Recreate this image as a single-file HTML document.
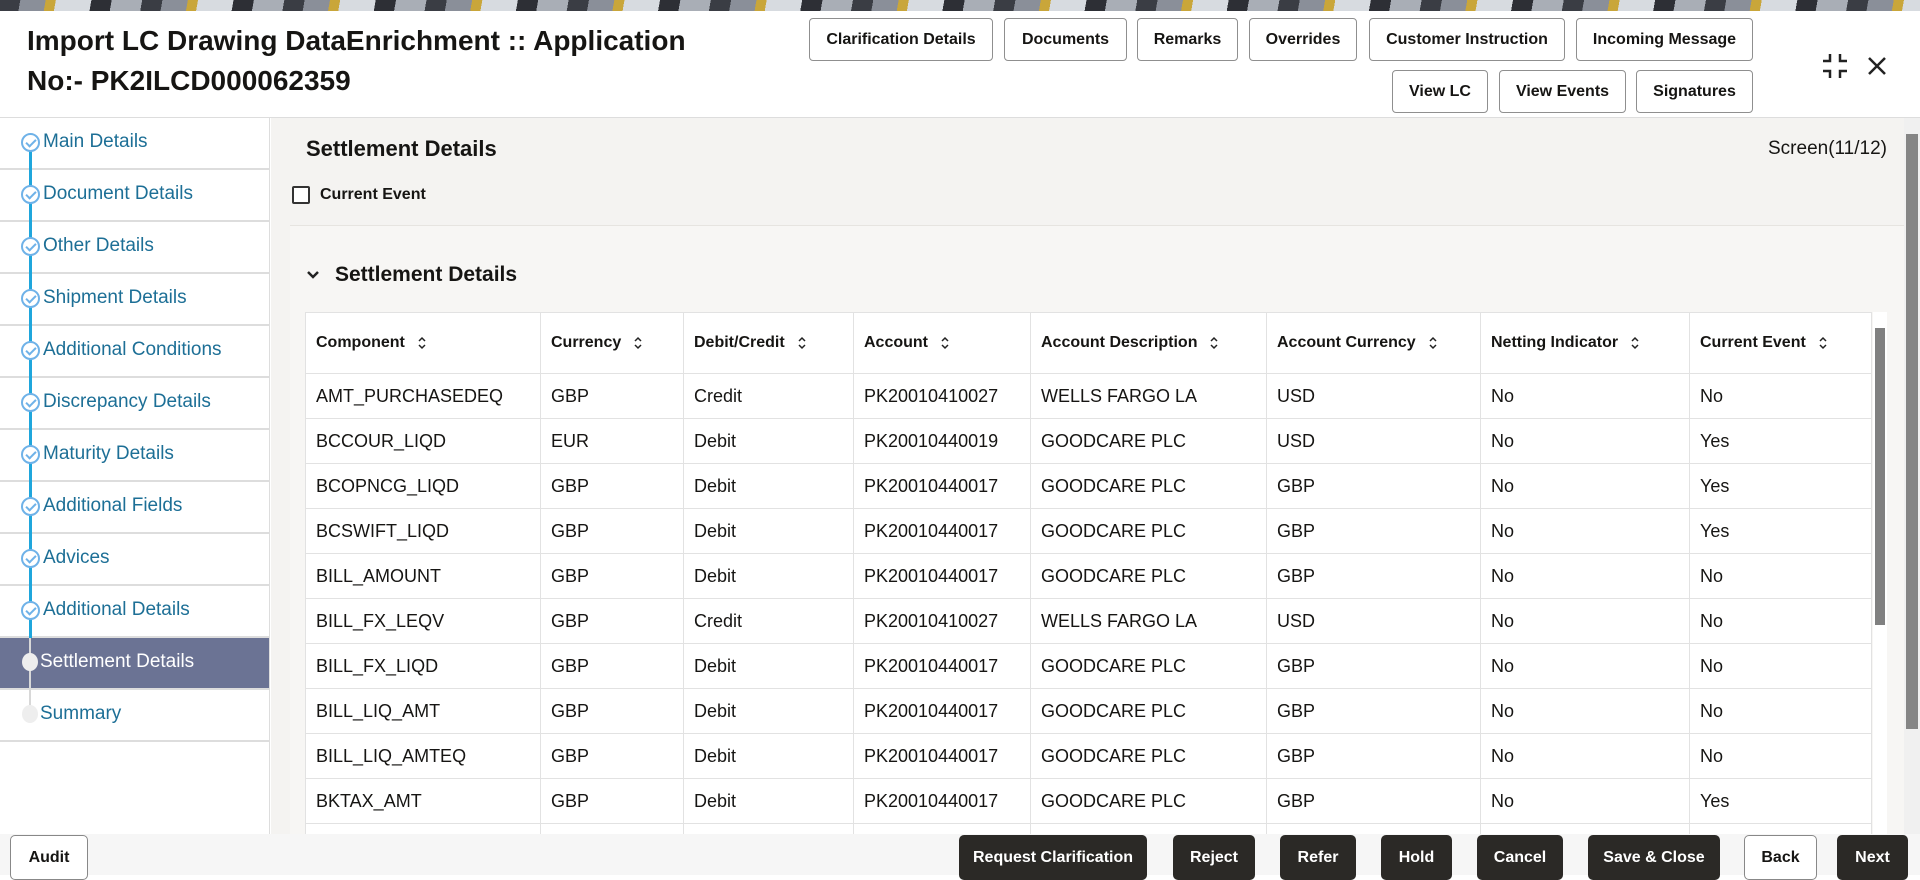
<!DOCTYPE html>
<html><head><meta charset="utf-8"><style>
*{box-sizing:border-box;margin:0;padding:0}
body{width:1920px;height:875px;overflow:hidden;font-family:"Liberation Sans",sans-serif;background:#fff;position:relative;color:#161513}
.banner{position:absolute;left:0;top:0;width:1920px;height:11px;background:repeating-linear-gradient(100deg,#3a3d44 0 20px,#8a8f99 20px 45px,#c9a63a 45px 55px,#d7dbe0 55px 90px,#2d2f35 90px 110px,#a9aeb6 110px 140px)}
.hdr{position:absolute;left:0;top:11px;width:1920px;height:107px;background:#fff;border-bottom:1px solid #ddd}
.title{position:absolute;left:27px;top:21px;font-size:28px;font-weight:bold;line-height:40px;color:#161513}
.btn{position:absolute;height:43px;border:1px solid #8f8f8f;border-radius:4px;background:#fff;font-size:16px;font-weight:bold;display:flex;align-items:center;justify-content:center;color:#161513}
.side{position:absolute;left:0;top:118px;width:270px;height:716px;background:#fff;border-right:1px solid #ddd}
.item{position:relative;height:52px;border-bottom:2px solid #ddd;font-size:19px;color:#1d6f96;padding-left:43px;line-height:48px}
.item .ln{position:absolute;left:29px;top:0;width:3px;height:52px;background:#1fa6dc}
.item .c{position:absolute;left:21px;top:15px;width:19px;height:19px;border-radius:50%;border:2px solid #6fb2e8;background:#fff}
.item .c:after{content:"";position:absolute;left:5px;top:2px;width:4px;height:8px;border:solid #6fb2e8;border-width:0 2px 2px 0;transform:rotate(45deg)}
.item.act{background:#6b7394;color:#fff;padding-left:40px}
.item.act .ln,.item.sum .ln{background:#d8d8d8;width:2px}
.item .d{position:absolute;left:22px;top:15px;width:16px;height:18px;border-radius:50%;background:#eee}
.main{position:absolute;left:271px;top:118px;width:1633px;height:716px;background:#f4f3f1}
.panel{position:absolute;left:290px;top:225px;width:1614px;height:609px;background:#f7f6f4;border-top:1px solid #e6e4e0}
table{position:absolute;left:305px;top:312px;border-collapse:collapse;background:#fff;font-size:18px}
td,th{border:1px solid #e2e2e2;padding:0 10px;text-align:left;white-space:nowrap}
th{height:61px;font-size:16px;font-weight:bold}
td{height:45px}
.s{display:inline-block;margin-left:12px;vertical-align:middle}
.foot{position:absolute;left:0;top:834px;width:1920px;height:41px;background:#f6f6f6}
.fb{position:absolute;top:835px;height:45px;border-radius:5px;background:#2b2926;color:#fff;font-size:16px;font-weight:bold;display:flex;align-items:center;justify-content:center}
.fw{background:#fff;color:#161513;border:1px solid #888}
</style></head><body>
<div class="banner"></div>
<div class="hdr"></div>
<div class="title">Import LC Drawing DataEnrichment :: Application<br>No:- PK2ILCD000062359</div>
<div class="btn" style="left:809px;top:18px;width:184px">Clarification Details</div>
<div class="btn" style="left:1004px;top:18px;width:123px">Documents</div>
<div class="btn" style="left:1137px;top:18px;width:101px">Remarks</div>
<div class="btn" style="left:1249px;top:18px;width:108px">Overrides</div>
<div class="btn" style="left:1369px;top:18px;width:196px">Customer Instruction</div>
<div class="btn" style="left:1576px;top:18px;width:177px">Incoming Message</div>
<div class="btn" style="left:1392px;top:70px;width:96px">View LC</div>
<div class="btn" style="left:1499px;top:70px;width:127px">View Events</div>
<div class="btn" style="left:1636px;top:70px;width:117px">Signatures</div>
<svg style="position:absolute;left:1821px;top:52px" width="28" height="28" viewBox="0 0 28 28" fill="none" stroke="#222" stroke-width="2.5"><path d="M9 2v7H2M19 2v7h7M9 26v-7H2M19 26v-7h7"/></svg>
<svg style="position:absolute;left:1866px;top:55px" width="22" height="22" viewBox="0 0 22 22" stroke="#222" stroke-width="2.5"><path d="M3 3l16 16M19 3L3 19"/></svg>
<div class="side">
<div class="item"><span class="ln" style="top:26px;height:26px"></span><span class="c"></span>Main Details</div>
<div class="item"><span class="ln"></span><span class="c"></span>Document Details</div>
<div class="item"><span class="ln"></span><span class="c"></span>Other Details</div>
<div class="item"><span class="ln"></span><span class="c"></span>Shipment Details</div>
<div class="item"><span class="ln"></span><span class="c"></span>Additional Conditions</div>
<div class="item"><span class="ln"></span><span class="c"></span>Discrepancy Details</div>
<div class="item"><span class="ln"></span><span class="c"></span>Maturity Details</div>
<div class="item"><span class="ln"></span><span class="c"></span>Additional Fields</div>
<div class="item"><span class="ln"></span><span class="c"></span>Advices</div>
<div class="item"><span class="ln"></span><span class="c"></span>Additional Details</div>
<div class="item act"><span class="ln"></span><span class="d"></span>Settlement Details</div>
<div class="item sum" style="padding-left:40px"><span class="ln" style="height:20px"></span><span class="d"></span>Summary</div>
</div>
<div class="main"></div>
<div style="position:absolute;left:306px;top:136px;font-size:22px;font-weight:bold">Settlement Details</div>
<div style="position:absolute;right:33px;top:138px;font-size:19px">Screen(11/12)</div>
<div style="position:absolute;left:292px;top:186px;width:18px;height:18px;border:2px solid #333;border-radius:2px;background:#fff"></div>
<div style="position:absolute;left:320px;top:186px;font-size:16px;font-weight:bold">Current Event</div>
<div class="panel"></div>
<svg style="position:absolute;left:306px;top:269px" width="14" height="12" viewBox="0 0 14 12" fill="none" stroke="#222" stroke-width="2.5"><path d="M2 3l5 5 5-5"/></svg>
<div style="position:absolute;left:335px;top:263px;font-size:21px;font-weight:bold">Settlement Details</div>
<svg width="0" height="0" style="position:absolute"><defs><symbol id="srt" viewBox="0 0 10 16"><path d="M2 6l3-3 3 3M2 10l3 3 3-3" fill="none" stroke="#222" stroke-width="1.5"/></symbol></defs></svg>
<table>
<tr><th style="width:235px">Component<svg class="s" width="10" height="16"><use href="#srt"/></svg></th><th style="width:143px">Currency<svg class="s" width="10" height="16"><use href="#srt"/></svg></th><th style="width:170px">Debit/Credit<svg class="s" width="10" height="16"><use href="#srt"/></svg></th><th style="width:177px">Account<svg class="s" width="10" height="16"><use href="#srt"/></svg></th><th style="width:236px">Account Description<svg class="s" width="10" height="16"><use href="#srt"/></svg></th><th style="width:214px">Account Currency<svg class="s" width="10" height="16"><use href="#srt"/></svg></th><th style="width:209px">Netting Indicator<svg class="s" width="10" height="16"><use href="#srt"/></svg></th><th style="width:182px">Current Event<svg class="s" width="10" height="16"><use href="#srt"/></svg></th></tr>
<tr><td>AMT_PURCHASEDEQ</td><td>GBP</td><td>Credit</td><td>PK20010410027</td><td>WELLS FARGO LA</td><td>USD</td><td>No</td><td>No</td></tr>
<tr><td>BCCOUR_LIQD</td><td>EUR</td><td>Debit</td><td>PK20010440019</td><td>GOODCARE PLC</td><td>USD</td><td>No</td><td>Yes</td></tr>
<tr><td>BCOPNCG_LIQD</td><td>GBP</td><td>Debit</td><td>PK20010440017</td><td>GOODCARE PLC</td><td>GBP</td><td>No</td><td>Yes</td></tr>
<tr><td>BCSWIFT_LIQD</td><td>GBP</td><td>Debit</td><td>PK20010440017</td><td>GOODCARE PLC</td><td>GBP</td><td>No</td><td>Yes</td></tr>
<tr><td>BILL_AMOUNT</td><td>GBP</td><td>Debit</td><td>PK20010440017</td><td>GOODCARE PLC</td><td>GBP</td><td>No</td><td>No</td></tr>
<tr><td>BILL_FX_LEQV</td><td>GBP</td><td>Credit</td><td>PK20010410027</td><td>WELLS FARGO LA</td><td>USD</td><td>No</td><td>No</td></tr>
<tr><td>BILL_FX_LIQD</td><td>GBP</td><td>Debit</td><td>PK20010440017</td><td>GOODCARE PLC</td><td>GBP</td><td>No</td><td>No</td></tr>
<tr><td>BILL_LIQ_AMT</td><td>GBP</td><td>Debit</td><td>PK20010440017</td><td>GOODCARE PLC</td><td>GBP</td><td>No</td><td>No</td></tr>
<tr><td>BILL_LIQ_AMTEQ</td><td>GBP</td><td>Debit</td><td>PK20010440017</td><td>GOODCARE PLC</td><td>GBP</td><td>No</td><td>No</td></tr>
<tr><td>BKTAX_AMT</td><td>GBP</td><td>Debit</td><td>PK20010440017</td><td>GOODCARE PLC</td><td>GBP</td><td>No</td><td>Yes</td></tr>
<tr><td></td><td></td><td></td><td></td><td></td><td></td><td></td><td></td></tr>
</table>
<div style="position:absolute;left:1873px;top:312px;width:14px;height:522px;background:#fff"></div>
<div style="position:absolute;left:1875px;top:328px;width:10px;height:297px;background:#808080"></div>
<div style="position:absolute;left:1904px;top:118px;width:16px;height:716px;background:#f0f0f0"></div>
<div style="position:absolute;left:1906px;top:134px;width:12px;height:595px;background:#858585"></div>
<div class="foot"></div>
<div class="fb fw" style="left:10px;width:78px">Audit</div>
<div class="fb" style="left:959px;width:188px">Request Clarification</div>
<div class="fb" style="left:1173px;width:82px">Reject</div>
<div class="fb" style="left:1280px;width:76px">Refer</div>
<div class="fb" style="left:1381px;width:71px">Hold</div>
<div class="fb" style="left:1477px;width:86px">Cancel</div>
<div class="fb" style="left:1588px;width:132px">Save &amp; Close</div>
<div class="fb fw" style="left:1744px;width:73px">Back</div>
<div class="fb" style="left:1837px;width:71px">Next</div>
</body></html>
